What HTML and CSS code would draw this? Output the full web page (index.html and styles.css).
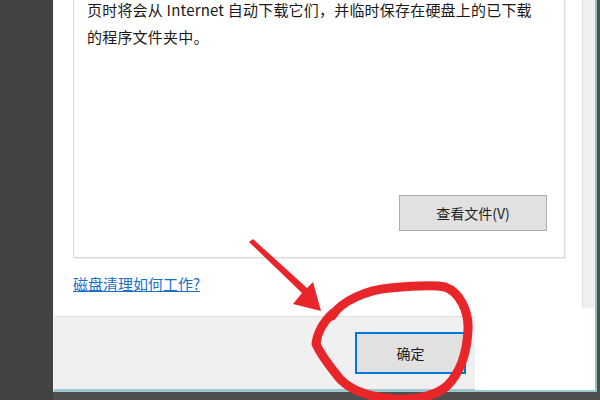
FILE: index.html
```html
<!DOCTYPE html>
<html lang="zh-CN">
<head>
  <meta charset="UTF-8" />
  <title>磁盘清理</title>
  <link rel="stylesheet" href="styles.css">
</head>
<body>
  <div class="desk">
    <div class="side"></div>
    <div class="window">
      <div class="window-body">
        <div class="main">
          <div class="content">
            <!-- description group box, its top is scrolled off -->
            <div class="group">
              <p class="desc">
                <span>页时将会从 Internet 自动下载它们，并临时保存在硬盘上的已下载</span>
                <span>的程序文件夹中。</span>
              </p>
              <button class="btn btn-view">查看文件(V)</button>
            </div>
            <a class="help-link" href="#">磁盘清理如何工作?</a>
          </div>
          <div class="footer">
            <button class="btn btn-ok">确定</button>
          </div>
        </div>
        <div class="rail"></div>
      </div>
    </div>
  </div>

  <!-- pasted white patch and red markup on top of the screenshot -->
  <div class="patch"></div>
  <svg class="markup" width="600" height="400" viewBox="0 0 600 400">
    <polygon points="249,242 253,239 307,288 313,282 321,311 293,304 302,293" fill="#e8262a"/>
    <path d="M332 316 C342 300 368 290 390 288 C410 286 432 284 445 287 C460 292 469 312 468 330 C467 350 461 372 447 386 C432 399 405 401 385 398 C362 395 345 387 336 374 C328 364 320 353 316 344 C317 334 323 322 333 313"
          fill="none" stroke="#e8262a" stroke-width="9" stroke-linecap="round" stroke-linejoin="round"/>
  </svg>
</body>
</html>
```

FILE: styles.css
```css
body {
  margin: 0;
  background: #4d4f4f;
  font-family: "Noto Sans CJK SC", "Noto Sans", sans-serif;
  overflow: hidden;
}

.desk {
  display: flex;
  height: 400px;
}

.side {
  width: 53px;
  background: #424242;
}

.window {
  flex: 1;
  height: 389px;
  display: flex;
  flex-direction: column;
  border-left: 1px solid #f4f4f4;
  border-right: 2px solid #8fc1bd;
  border-bottom: 3px solid #9fc7ce;
  margin-right: 3px;
  background: #fff;
}

.window-body {
  flex: 1;
  display: flex;
}

.main {
  flex: 1;
  display: flex;
  flex-direction: column;
}

.rail {
  width: 12px;
  background: #efefef;
  border-left: 1px solid #e2e2e2;
}

.content {
  height: 316px;
  padding-left: 19px;
  background: #fff;
  overflow: hidden;
}

.group {
  width: 490px;
  height: 276px;
  margin-top: -20px;
  border: 1px solid #dadada;
  box-shadow: 1px 1px 0 #efefef;
  display: flex;
  flex-direction: column;
}

.desc {
  margin: 0;
  padding: 19px 0 0 13px;
  display: flex;
  flex-direction: column;
  gap: 7px;
  font-size: 15px;
  line-height: 20px;
  color: #1a1a1a;
  letter-spacing: 0.2px;
}

.btn {
  font-family: "Noto Sans CJK SC", "Noto Sans", sans-serif;
  font-size: 14px;
  color: #1e1e1e;
  background: #e1e1e1;
  border: 1px solid #adadad;
  padding: 0;
}

.btn-view {
  margin-top: auto;
  margin-bottom: 26px;
  margin-right: 17px;
  align-self: flex-end;
  width: 148px;
  height: 36px;
}

.help-link {
  display: inline-block;
  margin-top: 15px;
  font-size: 15px;
  color: #1a6fc9;
  text-decoration: underline;
}

.footer {
  flex: 1;
  background: #f0f0f0;
  border-top: 1px solid #dfdfdf;
  padding: 15px 0 0 301px;
}

.btn-ok {
  width: 111px;
  height: 42px;
  border: 2px solid #0078d7;
}

.patch {
  position: absolute;
  left: 475px;
  top: 308px;
  width: 120px;
  height: 82px;
  background: #fff;
}

.markup {
  position: absolute;
  left: 0;
  top: 0;
  pointer-events: none;
}
```
